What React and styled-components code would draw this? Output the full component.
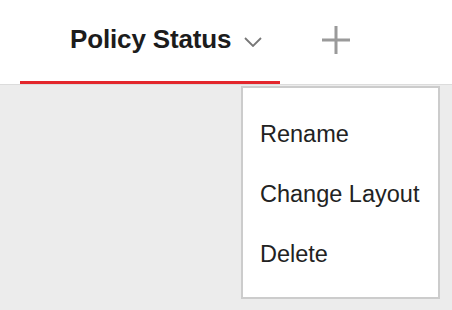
import React from "react";
import styled, { createGlobalStyle } from "styled-components";

const Global = createGlobalStyle`
  html, body { margin: 0; padding: 0; }
  body {
    width: 452px;
    height: 310px;
    overflow: hidden;
    background: #ececec;
    font-family: "Liberation Sans", Arial, sans-serif;
  }
`;

const Page = styled.div`
  position: relative;
  width: 452px;
  height: 310px;
  display: flex;
  flex-direction: column;
`;

const TabBar = styled.div`
  height: 84px;
  background: #ffffff;
  border-bottom: 1px solid #dcdcdc;
  display: flex;
  align-items: stretch;
  padding-left: 20px;
  box-sizing: content-box;
`;

const Tab = styled.div`
  width: 260px;
  display: flex;
  align-items: center;
  justify-content: flex-start;
  padding-left: 50px;
  gap: 13px;
  border-bottom: 3px solid ${(p) => (p.$active ? "#e3262c" : "transparent")};
  box-sizing: border-box;
  color: #1c1c1c;
`;

const TabLabel = styled.span`
  font-weight: bold;
  font-size: 26px;
  letter-spacing: -0.15px;
  margin-top: -2px;
`;

const AddButton = styled.div`
  display: flex;
  align-items: center;
  margin-left: 41px;
  padding-bottom: 5px;
`;

const Content = styled.div`
  flex: 1;
  background: #ececec;
`;

const Menu = styled.ul`
  position: absolute;
  left: 241px;
  top: 86px;
  width: 199px;
  height: 213px;
  margin: 0;
  padding: 21px 0 0 0;
  list-style: none;
  background: #ffffff;
  border: 2px solid #cccccc;
  box-sizing: border-box;
  display: flex;
  flex-direction: column;
`;

const MenuItem = styled.li`
  height: 60px;
  padding-left: 17px;
  font-size: 23.5px;
  color: #222222;
  line-height: 50px;
`;

function Chevron() {
  return (
    <svg width="18" height="10" viewBox="0 0 18 10" style={{ marginTop: 3 }}>
      <path d="M1 1 L9 9 L17 1" fill="none" stroke="#777" strokeWidth="1.8" />
    </svg>
  );
}

function Plus() {
  return (
    <svg width="30" height="30" viewBox="0 0 30 30">
      <path d="M15 1 V29 M1 15 H29" stroke="#9a9a9a" strokeWidth="3" fill="none" />
    </svg>
  );
}

export default function App() {
  return (
    <>
      <Global />
      <Page>
        <TabBar>
          <Tab $active>
            <TabLabel>Policy Status</TabLabel>
            <Chevron />
          </Tab>
          <AddButton>
            <Plus />
          </AddButton>
        </TabBar>
        <Content />
        <Menu>
          <MenuItem>Rename</MenuItem>
          <MenuItem>Change Layout</MenuItem>
          <MenuItem>Delete</MenuItem>
        </Menu>
      </Page>
    </>
  );
}
